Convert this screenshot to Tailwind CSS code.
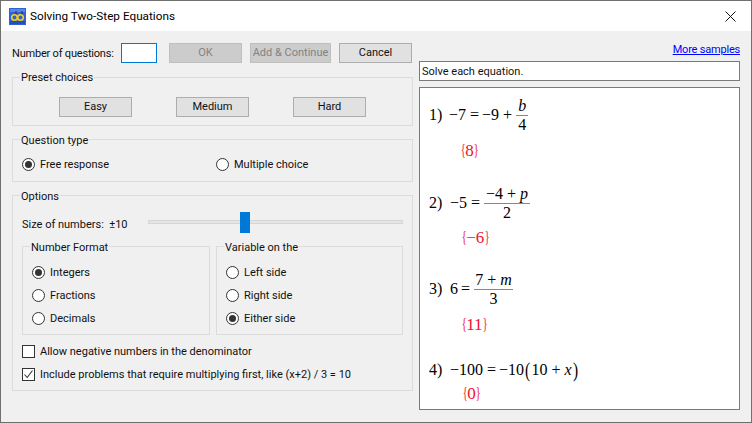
<!DOCTYPE html>
<html lang="en">
<head>
    <meta charset="UTF-8">
    <title>Solving Two-Step Equations</title>
    <script src="https://cdn.jsdelivr.net/npm/@tailwindcss/browser@4"></script>
</head>
<body class="bg-[#f0f0f0]">
<div class="w-[752px] h-[423px] border border-[#707070] bg-[#f0f0f0] flex flex-col overflow-hidden font-['Roboto',sans-serif] text-[11px] text-[#111]">

    <!-- title bar -->
    <div class="h-[30px] bg-white flex items-center pl-[8px] shrink-0">
        <svg width="17" height="17" viewBox="0 0 17 17" class="shrink-0">
            <rect width="17" height="17" fill="#2f62d6"/>
            <rect x="1" y="1" width="15" height="3" fill="#5b86e0"/>
            <rect x="1" y="13" width="15" height="3" fill="#2450b8"/>
            <path d="M7 3 V8 M13 3 V8" stroke="#16306e" stroke-width="1"/>
            <circle cx="5.5" cy="9.5" r="2.8" fill="none" stroke="#f5d020" stroke-width="1.6"/>
            <circle cx="11.5" cy="9.5" r="2.8" fill="none" stroke="#f5d020" stroke-width="1.6"/>
        </svg>
        <span class="ml-[4px] text-[11.75px] text-black translate-y-[1px]">Solving Two-Step Equations</span>
        <svg width="11" height="11" viewBox="0 0 11 11" class="ml-auto mr-[15px]">
            <path d="M0.5 0.5 L10.5 10.5 M10.5 0.5 L0.5 10.5" stroke="#111" stroke-width="1"/>
        </svg>
    </div>

    <div class="flex flex-1 min-h-0">
        <!-- left column -->
        <div class="w-[401px] ml-[11px] shrink-0">
            <div class="flex items-center h-[20px] mt-[12px]">
                <span class="w-[109px] whitespace-nowrap tracking-[-0.2px] translate-y-[1px]">Number of questions:</span>
                <input type="text" class="w-[36px] h-[20px] bg-white border border-[#0078d7] outline-none">
                <button class="w-[73px] h-[20px] ml-[12px] pt-[1px] bg-[#cccccc] border border-[#bfbfbf] text-[#838383]">OK</button>
                <button class="w-[81px] h-[20px] ml-[8px] pt-[1px] bg-[#cccccc] border border-[#bfbfbf] text-[#838383] whitespace-nowrap">Add &amp; Continue</button>
                <button class="w-[73px] h-[20px] ml-[8px] pt-[1px] bg-[#e1e1e1] border border-[#adadad]">Cancel</button>
            </div>

            <fieldset class="mt-[7px] h-[56px] border border-[#dcdcdc]">
                <legend class="ml-[7px] px-[1px] leading-[15px]">Preset choices</legend>
                <div class="flex gap-[44px] mt-[12px] ml-[46px]">
                    <button class="w-[73px] h-[20px] bg-[#e1e1e1] border border-[#adadad]">Easy</button>
                    <button class="w-[73px] h-[20px] bg-[#e1e1e1] border border-[#adadad]">Medium</button>
                    <button class="w-[73px] h-[20px] bg-[#e1e1e1] border border-[#adadad]">Hard</button>
                </div>
            </fieldset>

            <fieldset class="mt-[6px] h-[50px] border border-[#dcdcdc] pl-[9px]">
                <legend class="ml-[-2px] px-[1px] leading-[15px] translate-y-[1px]">Question type</legend>
                <div class="flex mt-[9px]">
                    <label class="flex items-center w-[194px]">
                        <span class="w-[13px] h-[13px] rounded-full border border-[#333] bg-white flex items-center justify-center"><span class="w-[7px] h-[7px] rounded-full bg-[#333]"></span></span>
                        <span class="ml-[5px] translate-y-[1px]">Free response</span>
                    </label>
                    <label class="flex items-center">
                        <span class="w-[13px] h-[13px] rounded-full border border-[#333] bg-white"></span>
                        <span class="ml-[5px] translate-y-[1px]">Multiple choice</span>
                    </label>
                </div>
            </fieldset>

            <fieldset class="mt-[6px] h-[203px] border border-[#dcdcdc] pl-[9px] pr-[9px]">
                <legend class="ml-[-2px] px-[1px] leading-[15px] translate-y-[1px]">Options</legend>

                <div class="flex items-center h-[22px] mt-[10px]">
                    <span class="w-[126px] translate-y-[1px]">Size of numbers:&nbsp; ±10</span>
                    <div class="relative w-[255px] h-[4px] bg-[#e3e6e6] border border-[#d6d6d6] -translate-y-[2px]">
                        <span class="absolute left-[91px] top-[-9px] w-[10px] h-[21px] bg-[#0078d7]"></span>
                    </div>
                </div>

                <div class="flex gap-[6px] mt-[4px]">
                    <fieldset class="w-[188px] h-[96px] border border-[#dcdcdc] pl-[9px]">
                        <legend class="ml-[-2px] px-[1px] leading-[15px] translate-y-[1px]">Number Format</legend>
                        <div class="flex flex-col gap-[10px] mt-[12px]">
                            <label class="flex items-center h-[13px]">
                                <span class="w-[13px] h-[13px] rounded-full border border-[#333] bg-white flex items-center justify-center"><span class="w-[7px] h-[7px] rounded-full bg-[#333]"></span></span>
                                <span class="ml-[5px] translate-y-[1px]">Integers</span>
                            </label>
                            <label class="flex items-center h-[13px]">
                                <span class="w-[13px] h-[13px] rounded-full border border-[#333] bg-white"></span>
                                <span class="ml-[5px] translate-y-[1px]">Fractions</span>
                            </label>
                            <label class="flex items-center h-[13px]">
                                <span class="w-[13px] h-[13px] rounded-full border border-[#333] bg-white"></span>
                                <span class="ml-[5px] translate-y-[1px]">Decimals</span>
                            </label>
                        </div>
                    </fieldset>
                    <fieldset class="w-[187px] h-[96px] border border-[#dcdcdc] pl-[9px]">
                        <legend class="ml-[-2px] px-[1px] leading-[15px] translate-y-[1px]">Variable on the</legend>
                        <div class="flex flex-col gap-[10px] mt-[12px]">
                            <label class="flex items-center h-[13px]">
                                <span class="w-[13px] h-[13px] rounded-full border border-[#333] bg-white"></span>
                                <span class="ml-[5px] translate-y-[1px]">Left side</span>
                            </label>
                            <label class="flex items-center h-[13px]">
                                <span class="w-[13px] h-[13px] rounded-full border border-[#333] bg-white"></span>
                                <span class="ml-[5px] translate-y-[1px]">Right side</span>
                            </label>
                            <label class="flex items-center h-[13px]">
                                <span class="w-[13px] h-[13px] rounded-full border border-[#333] bg-white flex items-center justify-center"><span class="w-[7px] h-[7px] rounded-full bg-[#333]"></span></span>
                                <span class="ml-[5px] translate-y-[1px]">Either side</span>
                            </label>
                        </div>
                    </fieldset>
                </div>

                <label class="flex items-center h-[13px] mt-[10px]">
                    <span class="w-[13px] h-[13px] border border-[#333] bg-white"></span>
                    <span class="ml-[5px] translate-y-[1px]">Allow negative numbers in the denominator</span>
                </label>
                <label class="flex items-center h-[13px] mt-[10px]">
                    <span class="w-[13px] h-[13px] border border-[#333] bg-white flex items-center justify-center">
                        <svg width="11" height="11" viewBox="0 0 11 11"><path d="M1.5 5.5 L4.2 8.5 L9.5 1.5" fill="none" stroke="#333" stroke-width="1.1"/></svg>
                    </span>
                    <span class="ml-[5px] translate-y-[1px]">Include problems that require multiplying first, like (x+2) / 3 = 10</span>
                </label>
            </fieldset>
        </div>

        <!-- right column -->
        <div class="w-[321px] ml-[6px] shrink-0">
            <div class="text-right mt-[11px] h-[19px] leading-[16px]">
                <a href="#" class="text-[#0000ff] underline tracking-[-0.2px]">More samples</a>
            </div>
            <div class="h-[20px] bg-white border border-[#7a7a7a] pl-[2px] leading-[20px]">Solve each equation.</div>
            <div class="h-[323px] mt-[6px] bg-white border border-[#7a7a7a] pl-[9px] font-['Liberation_Serif',serif] text-[16px] leading-[20px] text-black">

                <div class="flex items-center h-[38px] mt-[8px] whitespace-pre">
                    <span class="w-[20px]">1)</span>
                    <span>−7</span><span class="ml-[4px]">=</span><span class="ml-[3px]">−9</span><span class="ml-[4px]">+</span>
                    <span class="inline-flex flex-col items-center w-[12px] ml-[4px]">
                        <span class="italic border-b border-[#888] w-full text-center leading-[18px]">b</span>
                        <span class="leading-[18px]">4</span>
                    </span>
                </div>
                <div class="ml-[31px] mt-[7px] text-[#f01030] text-[17px] h-[23px]"><span class="inline-block scale-x-[.6] -mx-[1.5px]">{</span>8<span class="inline-block scale-x-[.6] -mx-[1.5px]">}</span></div>

                <div class="flex items-center h-[38px] mt-[20px] whitespace-pre">
                    <span class="w-[21px]">2)</span>
                    <span>−5</span><span class="ml-[4px]">=</span>
                    <span class="inline-flex flex-col items-center w-[46px] ml-[4px]">
                        <span class="border-b border-[#888] w-full text-center leading-[18px]">−4 + <i>p</i></span>
                        <span class="leading-[18px]">2</span>
                    </span>
                </div>
                <div class="ml-[32px] mt-[6px] text-[#f01030] text-[17px] h-[23px]"><span class="inline-block scale-x-[.6] -mx-[1.5px]">{</span>−6<span class="inline-block scale-x-[.6] -mx-[1.5px]">}</span></div>

                <div class="flex items-center h-[38px] mt-[19px] whitespace-pre">
                    <span class="w-[21px]">3)</span>
                    <span>6</span><span class="ml-[3px]">=</span>
                    <span class="inline-flex flex-col items-center w-[39px] ml-[4px]">
                        <span class="border-b border-[#888] w-full text-center leading-[18px]">7 + <i>m</i></span>
                        <span class="leading-[18px]">3</span>
                    </span>
                </div>
                <div class="ml-[32px] mt-[7px] text-[#f01030] text-[17px] h-[23px]"><span class="inline-block scale-x-[.6] -mx-[1.5px]">{</span>11<span class="inline-block scale-x-[.6] -mx-[1.5px]">}</span></div>

                <div class="flex items-center h-[22px] mt-[21px] whitespace-pre">
                    <span class="w-[21px]">4)</span>
                    <span>−100</span><span class="ml-[4px]">=</span><span class="ml-[3px]">−10</span><span class="text-[22px] scale-x-[.7]">(</span><span>10</span><span class="ml-[4px]">+</span><span class="ml-[4px] italic">x</span><span class="text-[22px] scale-x-[.7]">)</span>
                </div>
                <div class="ml-[33px] mt-[3px] text-[#f01030] text-[17px] h-[23px]"><span class="inline-block scale-x-[.6] -mx-[1.5px]">{</span>0<span class="inline-block scale-x-[.6] -mx-[1.5px]">}</span></div>
            </div>
        </div>
    </div>
</div>
</body>
</html>
